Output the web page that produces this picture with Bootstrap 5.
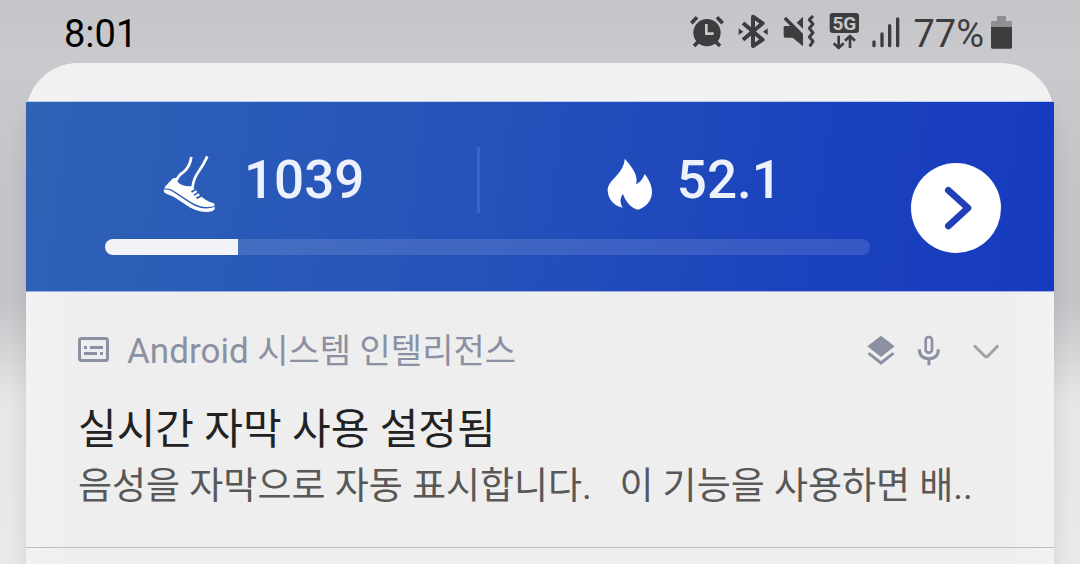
<!DOCTYPE html>
<html lang="ko">
<head>
<meta charset="utf-8">
<meta name="viewport" content="width=device-width, initial-scale=1">
<title>알림</title>
<link href="https://cdn.jsdelivr.net/npm/bootstrap@5.3.0/dist/css/bootstrap.min.css" rel="stylesheet">
<style>
  body {
    font-family: Roboto, "Noto Sans CJK KR", sans-serif;
    background: linear-gradient(#c5c5c9 0, #cacace 60px, #c3c3c8 200px, #c3c3c8 300px, #d6d6d8 355px, #e6e6e6 400px, #e9e9e9 100%);
    overflow: hidden;
  }
  svg { display: block; flex: none; }
  .status-bar { height: 63px; padding: 0 67px 0 64px; color: #3d3d3f; }
  .status-icons svg { height: 38px; }
  .status-icons { gap: 13px; margin-right: 12px; margin-bottom: 1px; }
  .clock { font-size: 38px; line-height: 38px; color: #000; padding-top: 4px; }
  .charge { font-size: 38px; line-height: 38px; padding-top: 4px; margin-right: 6px; }
  .shade {
    margin: 0 26px; padding-top: 38px; min-height: calc(100vh - 63px);
    border-radius: 52px 52px 0 0;
    background: linear-gradient(#f1f1f1 0, #f1f1f1 38px, transparent 38px), linear-gradient(90deg, #f2f2f2 0, #eee 50px, #eee calc(100% - 50px), #f2f2f2 100%);
    box-shadow: 0 24px 20px rgba(0, 0, 0, .1);
  }
  .steps {
    padding: 45px 53px 36px 79px;
    border-top: 1px solid #b9cdf0; border-bottom: 1px solid #9fb0e4;
    background: linear-gradient(98deg, #2f62b5 0, #2a5bb8 20%, #2450ba 48%, #1b43bd 75%, #163abf 100%) padding-box;
    color: #edf1fc;
  }
  .stat { height: 66px; font-size: 53px; line-height: 66px; font-weight: 500; }
  .stat svg { margin-top: 7px; }
  .stat-steps { flex: 0 0 49%; border-right: 3px solid #3d63c3; padding-left: 57px; gap: 28px; }
  .stat-burn { padding-left: 127px; gap: 24px; }
  .goal { height: 16px; margin-top: 26px; border-radius: 8px; background: rgba(255, 255, 255, .12); }
  .goal .progress-bar { background: #f1f3f7; }
  .go { width: 90px; height: 90px; background: #fff; margin-left: 41px; margin-top: 16px; }
  .notice { padding: 34px 54px 33px 52px; border-bottom: 1px solid #bdbdbd; }
  .notice-source { font-size: 35px; line-height: 44px; color: #8b90a2; }
  .notice-icons { gap: 22px; }
  .source-name { margin-left: 17px; padding-top: 3px; }
  .source-ko { font-size: 34px; }
  .expand { margin-left: 9px; margin-top: 3px; }
  .notice-title { font-size: 42px; line-height: 60px; color: #222; margin-top: 26px; }
  .notice-text { font-size: 37px; line-height: 54px; color: #585858; white-space: pre; }
</style>
</head>
<body>
<header class="status-bar d-flex align-items-center">
  <time class="clock me-auto">8:01</time>
  <div class="status-icons d-flex">
    <svg width="34" viewBox="33 36 102 114" aria-label="알람">
      <path d="M37 70 54 52M131 70 114 52M58 125 45 138M110 125 123 138" fill="none" stroke="currentColor" stroke-width="11"/>
      <circle cx="84" cy="98" r="41" fill="currentColor"/>
      <path d="M82 72V101H104" fill="none" stroke="#c8c8cc" stroke-width="8"/>
    </svg>
    <svg width="31" viewBox="175 36 93 114" aria-label="블루투스">
      <path d="M193 69 252 119 223 138V50L252 70 193 119" fill="none" stroke="currentColor" stroke-width="12" stroke-linejoin="round"/>
      <path d="M180 85 194 95 180 105ZM267 85 253 95 267 105Z" fill="currentColor"/>
    </svg>
    <svg width="34" viewBox="306 36 102 114" aria-label="진동">
      <path d="M314 81Q314 78 318 78H334L314 58 321 50 372 101V139L341 113H319Q314 113 314 109ZM353 68 372 50V86Z" fill="currentColor"/>
      <path d="M402 48 391 59 402 72 391 85 402 98 391 111 402 124 392 139" fill="none" stroke="currentColor" stroke-width="9" stroke-linejoin="round"/>
    </svg>
    <svg width="31" viewBox="448 36 93 114" overflow="visible" aria-label="5G">
      <rect x="453" y="39" width="88" height="60" rx="9" fill="currentColor"/>
      <text x="497" y="89" text-anchor="middle" font-family="Roboto, sans-serif" font-size="57" font-weight="700" fill="#c8c8cc">5G</text>
      <path d="M480 107V143M465 130 480 144 495 130M514 144V110M499 122 514 108 529 122" fill="none" stroke="currentColor" stroke-width="8"/>
    </svg>
    <svg width="29" viewBox="35 36 87 114" aria-label="신호">
      <path d="M41 126V137M65 102V137M88 77V137M112 57V137" stroke="currentColor" stroke-width="10" stroke-linecap="round"/>
    </svg>
  </div>
  <span class="charge">77%</span>
  <svg width="23" height="38" viewBox="390 36 69 114" aria-label="배터리">
    <path d="M411 48Q411 45 414 45H435Q438 45 438 48V60H452Q456 60 456 64V80H393V64Q393 60 397 60H411Z" fill="#8f8f92"/>
    <path d="M393 78H456V139Q456 143 452 143H397Q393 143 393 139Z" fill="currentColor"/>
  </svg>
</header>

<main class="shade">
  <section class="steps d-flex align-items-start">
    <div class="flex-grow-1">
      <div class="d-flex">
        <div class="stat stat-steps d-flex align-items-center">
          <svg width="54" height="58" viewBox="66 48 162 174" aria-label="걸음">
            <path d="M154 54Q150 82 132 98Q113 111 110 124M202 52Q190 78 177 96Q160 119 158 144" fill="none" stroke="#fff" stroke-width="8"/>
            <path d="M74 145Q84 133 97 120Q103 115 109 118Q111 132 126 138Q142 144 158 141L164 150 153 157 156 161 168 154 172 159 160 167 164 170 175 163 180 169 167 176 172 180 185 173Q202 188 220 192Q225 195 224 201Q203 207 181 202Q165 197 148 186L101 155Q89 147 74 149Z" fill="#fff"/>
            <path d="M71 152Q85 149 98 158L146 190Q164 203 183 207Q204 211 224 204Q226 213 216 217Q193 222 169 214Q155 209 142 200L101 173Q87 168 76 163Q70 160 71 152Z" fill="#fff"/>
          </svg>
          <span>1039</span>
        </div>
        <div class="stat stat-burn d-flex align-items-center">
          <svg width="46" height="52" viewBox="51 49 138 156" aria-label="칼로리">
            <path d="M104 51C118 66 134 86 138 103Q141 115 139 128Q157 118 164 97C177 113 186 133 186 151C186 178 166 198 144 204C126 200 108 184 99 157C89 169 90 185 98 198C72 193 54 171 53 147C52 114 102 98 104 51Z" fill="#fff"/>
          </svg>
          <span>52.1</span>
        </div>
      </div>
      <div class="progress goal" role="progressbar" aria-label="목표" aria-valuenow="17" aria-valuemin="0" aria-valuemax="100">
        <div class="progress-bar" style="width:17.4%"></div>
      </div>
    </div>
    <button type="button" class="go btn rounded-circle border-0 p-0 d-flex align-items-center justify-content-center flex-shrink-0" aria-label="열기">
      <svg width="30" height="44" viewBox="246 136 90 132" overflow="visible">
        <path d="M268 149 327 202 268 256" fill="none" stroke="#2040b4" stroke-width="20" stroke-linecap="round" stroke-linejoin="round"/>
      </svg>
    </button>
  </section>

  <article class="notice">
    <div class="notice-source d-flex align-items-center">
      <svg width="32" height="26" viewBox="0 0 32 26" aria-hidden="true">
        <rect x="1.5" y="1.5" width="28" height="22" rx="2" fill="none" stroke="currentColor" stroke-width="3"/>
        <path d="M6 10.500H9M12 10.500H25M6 16.500H19M22 16.500H25" stroke="currentColor" stroke-width="3"/>
      </svg>
      <span class="source-name me-auto">Android <span class="source-ko">시스템 인텔리전스</span></span>
      <div class="notice-icons d-flex align-items-center">
        <svg width="28" height="31" viewBox="52 40 84 93" aria-label="레이어">
          <path d="M94 42 135 74 94 106 53 74ZM53 97 60 92 94 118 128 92 135 97 94 130Z" fill="currentColor"/>
        </svg>
        <svg width="24" height="31" viewBox="203 40 72 93" aria-label="마이크">
          <rect x="229" y="46" width="19" height="47" rx="9" fill="none" stroke="currentColor" stroke-width="8"/>
          <path d="M210 83Q210 111 239 111Q267 111 267 83M239 111V131" fill="none" stroke="currentColor" stroke-width="9"/>
        </svg>
        <button type="button" class="expand btn border-0 p-0" aria-label="펼치기">
          <svg width="28" height="17" viewBox="366 69 84 51">
            <path d="M375 79 404 108Q409 112 414 108L442 79" fill="none" stroke="#a3a3a3" stroke-width="9" stroke-linecap="round"/>
          </svg>
        </button>
      </div>
    </div>
    <h1 class="notice-title fw-normal mb-0">실시간 자막 사용 설정됨</h1>
    <p class="notice-text mb-0">음성을 자막으로 자동 표시합니다.   이 기능을 사용하면 배..</p>
  </article>
</main>
<script src="https://cdn.jsdelivr.net/npm/bootstrap@5.3.0/dist/js/bootstrap.bundle.min.js"></script>
</body>
</html>
